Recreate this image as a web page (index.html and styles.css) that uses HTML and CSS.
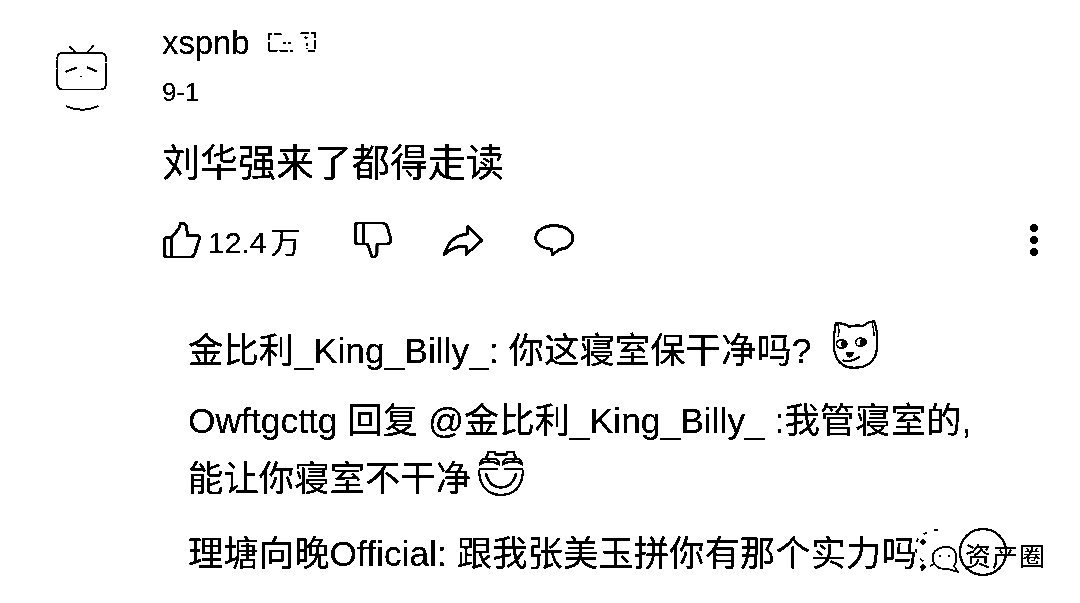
FILE: index.html
```html
<!DOCTYPE html>
<html lang="zh">
<head>
<meta charset="utf-8">
<title>评论</title>
<link rel="stylesheet" href="styles.css">
</head>
<body>
<main class="page">
  <section class="comment">
    <svg class="avatar" viewBox="70 90 170 210">
      <g fill="none" stroke="#000" stroke-width="5" stroke-linecap="round">
        <path d="M170 122 L190 100 M118 103 L138 122" stroke-dasharray="12 5"/>
        <path d="M95 122 H212 Q228 122 228 138 V215 Q228 233 212 233 H95 Q80 233 80 215 V138 Q80 122 95 122Z" stroke-dasharray="60 6 22 5"/>
        <path d="M108 178 L136 168 M172 166 L198 178" stroke-width="6"/>
        <path d="M108 284 Q155 305 204 284"/>
      </g>
      <circle cx="152" cy="193" r="2.5"/>
    </svg>
    <div class="comment-body">
      <div class="name-row">
        <span class="name">xspnb</span>
        <svg class="level" viewBox="0 0 50 22">
          <g fill="none" stroke="#000" stroke-width="2">
            <path d="M1 20 V3 H14 M1 20 H26 M34 2 H49 V20 H42" stroke-dasharray="9 2"/>
            <path d="M16 12 H26 M38 6 L42 7 M41 12 V18" stroke-dasharray="3 2"/>
          </g>
        </svg>
      </div>
      <div class="date">9-1</div>
      <p class="text">刘华强来了都得走读</p>
      <div class="actions">
        <div class="like">
          <svg class="icon-like" viewBox="40 35 116 114">
            <path d="M46 95 Q46 85 55 85 H68 L90 58 L95 42 Q105 38 114 50 L115 78 H145 Q153 78 151 90 L137 135 Q134 143 125 143 H55 Q46 143 46 135Z M68 85 V143" fill="none" stroke="#000" stroke-width="8" stroke-linejoin="round"/>
          </svg>
          <span class="count">12.4 万</span>
        </div>
        <svg class="icon-down" viewBox="608 34 120 114">
          <path d="M615 48 Q615 40 624 40 H695 Q708 40 712 55 L722 90 Q722 103 710 103 H680 V132 Q677 145 665 141 L652 103 H624 Q615 103 615 95Z M640 40 V103" fill="none" stroke="#000" stroke-width="8" stroke-linejoin="round"/>
        </svg>
        <svg class="icon-share" viewBox="878 40 125 100">
          <path d="M997 90 L955 47 V70 Q900 75 884 133 Q910 105 950 108 V132Z" fill="none" stroke="#000" stroke-width="8" stroke-linejoin="round"/>
        </svg>
        <svg class="icon-comment" viewBox="1152 45 124 100">
          <path d="M1213 50 C1245 50 1270 65 1270 87 C1270 108 1248 122 1228 122 L1208 138 L1205 122 C1180 120 1157 108 1157 87 C1157 65 1182 50 1213 50Z" fill="none" stroke="#000" stroke-width="8" stroke-linejoin="round"/>
        </svg>
        <div class="more"><i></i><i></i><i></i></div>
      </div>
    </div>
  </section>
  <section class="replies">
    <p class="reply">金比利_King_Billy_: 你这寝室保干净吗?
      <svg class="doge" viewBox="0 0 48 52">
        <path d="M3 3 Q12 3 17 7 Q24 5 31 6 Q37 2 43 1 Q47 12 46 28 Q45 45 30 49 Q15 52 7 44 Q0 36 1 22 Q1 12 3 3Z" fill="#fff" stroke="#000" stroke-width="2"/>
        <path d="M5 4 Q8 12 5 18 M41 3 Q43 12 43 17" fill="none" stroke="#000"/>
        <ellipse cx="9" cy="25" rx="5.5" ry="4.2" fill="#fff" stroke="#000" stroke-width="1.5"/>
        <ellipse cx="29" cy="23" rx="5.5" ry="4.2" fill="#fff" stroke="#000" stroke-width="1.5"/>
        <circle cx="11" cy="25" r="3"/>
        <circle cx="31" cy="23" r="3"/>
        <path d="M13 34 Q18 32 22 34 Q20 39 17 39 Q14 38 13 34Z"/>
        <path d="M10 42 Q18 45 28 38" fill="none" stroke="#000" stroke-width="2"/>
      </svg>
    </p>
    <p class="reply">Owftgcttg 回复 @金比利_King_Billy_ :我管寝室的,<br>能让你寝室不干净
      <svg class="laugh" viewBox="0 0 50 48">
        <path d="M9 10 L12 2 H18 L20 5 H30 L32 2 H38 L41 10" fill="none" stroke="#000" stroke-width="2.500"/>
        <path d="M3 15 Q4 8 12 9 H18 Q23 10 23 15 Q18 12 12 12 Q6 12 3 15Z M27 15 Q27 10 32 9 H38 Q46 8 47 15 Q44 12 38 12 Q32 12 27 15Z" fill="none" stroke="#000" stroke-width="2"/>
        <path d="M2 20 H22 M28 20 H48" stroke="#000" stroke-width="2.500"/>
        <path d="M2 21 Q3 46 25 47 Q47 46 48 21" fill="none" stroke="#000" stroke-width="2"/>
        <path d="M9 24 Q13 39 25 39 Q37 39 41 24" fill="none" stroke="#000" stroke-width="2.500"/>
      </svg>
    </p>
    <p class="reply">理塘向晚Official: 跟我张美玉拼你有那个实力吗?</p>
  </section>
  <aside class="mark">
    <svg class="mark-logo" viewBox="0 0 120 56">
      <path d="M26 10 Q6 12 3 26 Q4 36 12 42 L10 50 L22 44" fill="#fff" stroke="#000" stroke-width="1.500" stroke-dasharray="4 7"/>
      <circle cx="11" cy="22" r="2.500"/>
      <circle cx="11" cy="47" r="2.500"/>
      <path d="M26 29 Q36 24 42 30 Q47 38 42 46 L46 52 L36 49 Q24 50 21 41 Q19 33 26 29Z" fill="#fff" stroke="#000" stroke-width="1.500"/>
      <circle cx="28" cy="36" r="1.200"/>
      <circle cx="37" cy="36" r="1.200"/>
      <circle cx="71" cy="32" r="23" fill="none" stroke="#000" stroke-width="2"/>
    </svg>
    <span class="mark-text">资产圈</span>
  </aside>
</main>
</body>
</html>
```
FILE: styles.css
```css
* { box-sizing: border-box; }
html, body { margin: 0; padding: 0; background: #fff; }
body { width: 1080px; height: 603px; overflow: hidden; font-family: "Liberation Sans", "Noto Sans CJK SC", sans-serif; color: #000; }
.page { position: relative; width: 1080px; height: 603px; overflow: hidden; background: #fff; filter: grayscale(1) brightness(0.75) contrast(100); }
p { margin: 0; }
.comment { display: flex; padding: 23px 42px 0 54px; gap: 52px; }
.avatar { width: 56px; height: 70px; margin-top: 19px; flex: none; }
.comment-body { flex: 1; }
.name-row { display: flex; align-items: center; gap: 18px; height: 40px; }
.name { font-size: 32.800px; }
.level { width: 48px; height: 22px; margin-top: -2px; }
.date { font-size: 26px; line-height: 30px; margin-top: 14px; }
.text { font-size: 38px; line-height: 50px; margin-top: 31px; }
.actions { display: flex; align-items: center; height: 50px; margin-top: 27px; }
.like { display: flex; align-items: center; gap: 7px; width: 191px; }
.icon-like { width: 39px; height: 38px; flex: none; }
.count { font-size: 30px; word-spacing: -4px; }
.icon-down { width: 40px; height: 38px; flex: none; }
.icon-share { width: 42px; height: 33px; margin-left: 49px; flex: none; }
.icon-comment { width: 41px; height: 33px; margin-left: 50px; flex: none; }
.more { display: flex; flex-direction: column; gap: 4px; margin-left: auto; }
.more i { width: 8px; height: 8px; border-radius: 50%; background: #000; display: block; }
.replies { padding: 55px 60px 0 188px; display: flex; flex-direction: column; gap: 12px; }
.reply { font-size: 35.400px; line-height: 58px; white-space: nowrap; }
.reply:last-child { margin-top: 5px; }
.doge { width: 46px; height: 50px; vertical-align: -7px; margin-left: 12px; }
.laugh { width: 48px; height: 46px; vertical-align: -5px; margin-left: -4px; }
.mark { position: absolute; left: 912px; top: 520px; display: flex; align-items: center; }
.mark-logo { width: 120px; height: 56px; flex: none; }
.mark-text { position: absolute; left: 53px; top: 22px; font-size: 26px; line-height: 30px; letter-spacing: 1px; white-space: nowrap; }
```
